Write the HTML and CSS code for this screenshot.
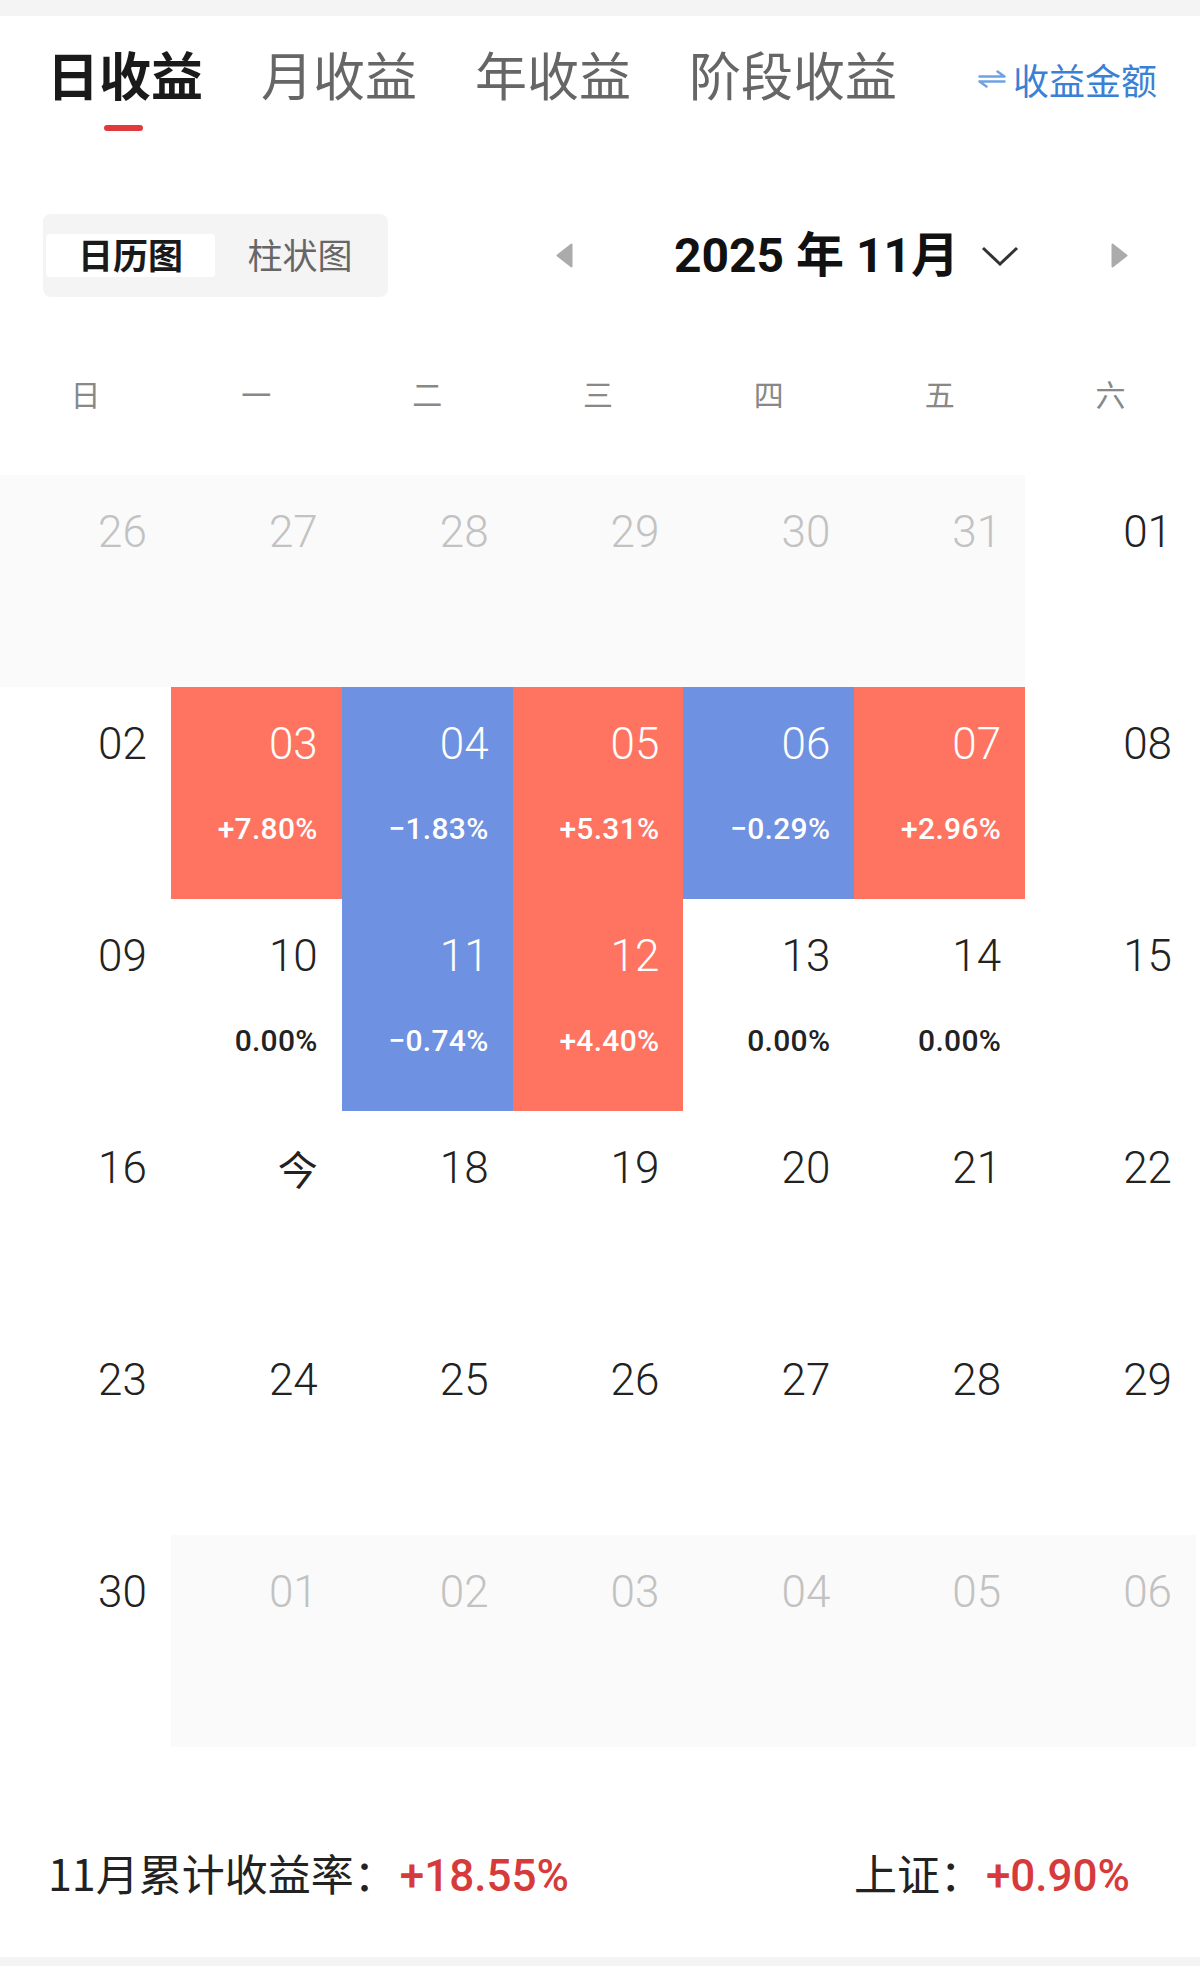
FILE: index.html
```html
<!DOCTYPE html>
<html lang="zh-CN">
<head>
<meta charset="utf-8">
<title>日收益</title>
<link rel="stylesheet" href="styles.css">
</head>
<body>
<div class="page">
  <div class="topbar"></div>
  <header class="tabs">
    <div class="tab active"><span>日收益</span><i class="underline"></i></div>
    <div class="tab">月收益</div>
    <div class="tab">年收益</div>
    <div class="tab">阶段收益</div>
    <div class="switch">
      <svg class="swap" width="28" height="18" viewBox="0 0 28 18"><path d="M1.5 6.5H26.5M26.5 6.5L19.5 1.5M26.5 11.5H1.5M1.5 11.5L8.5 16.5" fill="none" stroke="#6ea3e3" stroke-width="2.4" stroke-linecap="round" stroke-linejoin="round"/></svg>
      <span>收益金额</span>
    </div>
  </header>

  <div class="toolbar">
    <div class="segment">
      <div class="seg on">日历图</div>
      <div class="seg">柱状图</div>
    </div>
    <div class="monthnav">
      <svg class="tri" width="17" height="25" viewBox="0 0 17 25"><path d="M15.5 1.5L1.5 12.5L15.5 23.5Z" fill="#ababab" stroke="#ababab" stroke-width="2" stroke-linejoin="round"/></svg>
      <div class="month">2025 年 11月</div>
      <svg class="chev" width="38" height="20" viewBox="0 0 38 20"><path d="M2 2L19 18L36 2" fill="none" stroke="#333" stroke-width="3"/></svg>
      <svg class="tri next" width="17" height="25" viewBox="0 0 17 25"><path d="M1.5 1.5L15.5 12.5L1.5 23.5Z" fill="#ababab" stroke="#ababab" stroke-width="2" stroke-linejoin="round"/></svg>
    </div>
  </div>

  <div class="weekdays">
    <div>日</div><div>一</div><div>二</div><div>三</div><div>四</div><div>五</div><div>六</div>
  </div>

  <div class="grid">
    <div class="cell muted"><span class="num">26</span></div>
    <div class="cell muted"><span class="num">27</span></div>
    <div class="cell muted"><span class="num">28</span></div>
    <div class="cell muted"><span class="num">29</span></div>
    <div class="cell muted"><span class="num">30</span></div>
    <div class="cell muted"><span class="num">31</span></div>
    <div class="cell"><span class="num">01</span></div>

    <div class="cell"><span class="num">02</span></div>
    <div class="cell up"><span class="num">03</span><span class="pct">+7.80%</span></div>
    <div class="cell down"><span class="num">04</span><span class="pct">−1.83%</span></div>
    <div class="cell up"><span class="num">05</span><span class="pct">+5.31%</span></div>
    <div class="cell down"><span class="num">06</span><span class="pct">−0.29%</span></div>
    <div class="cell up"><span class="num">07</span><span class="pct">+2.96%</span></div>
    <div class="cell"><span class="num">08</span></div>

    <div class="cell"><span class="num">09</span></div>
    <div class="cell"><span class="num">10</span><span class="pct">0.00%</span></div>
    <div class="cell down"><span class="num">11</span><span class="pct">−0.74%</span></div>
    <div class="cell up"><span class="num">12</span><span class="pct">+4.40%</span></div>
    <div class="cell"><span class="num">13</span><span class="pct">0.00%</span></div>
    <div class="cell"><span class="num">14</span><span class="pct">0.00%</span></div>
    <div class="cell"><span class="num">15</span></div>

    <div class="cell"><span class="num">16</span></div>
    <div class="cell"><span class="num today">今</span></div>
    <div class="cell"><span class="num">18</span></div>
    <div class="cell"><span class="num">19</span></div>
    <div class="cell"><span class="num">20</span></div>
    <div class="cell"><span class="num">21</span></div>
    <div class="cell"><span class="num">22</span></div>

    <div class="cell"><span class="num">23</span></div>
    <div class="cell"><span class="num">24</span></div>
    <div class="cell"><span class="num">25</span></div>
    <div class="cell"><span class="num">26</span></div>
    <div class="cell"><span class="num">27</span></div>
    <div class="cell"><span class="num">28</span></div>
    <div class="cell"><span class="num">29</span></div>

    <div class="cell"><span class="num">30</span></div>
    <div class="cell muted"><span class="num">01</span></div>
    <div class="cell muted"><span class="num">02</span></div>
    <div class="cell muted"><span class="num">03</span></div>
    <div class="cell muted"><span class="num">04</span></div>
    <div class="cell muted"><span class="num">05</span></div>
    <div class="cell muted"><span class="num">06</span></div>
  </div>

  <div class="summary">
    <div class="stat"><span class="label">11月累计收益率：</span><span class="value">+18.55%</span></div>
    <div class="stat"><span class="label">上证：</span><span class="value">+0.90%</span></div>
  </div>
  <div class="bottombar"></div>
</div>
</body>
</html>
```

FILE: styles.css
```css
* { box-sizing: border-box; }
html, body { margin: 0; padding: 0; background: #fff; }
body {
  font-family: "Noto Sans CJK SC", "Noto Sans", sans-serif;
  color: #222;
}
.page { width: 1200px; }

.topbar { height: 16px; background: #f4f4f4; }

.tabs {
  height: 198px;
  display: flex;
  align-items: flex-start;
  padding: 28px 0 0 47px;
}
.tab {
  display: flex;
  flex-direction: column;
  align-items: center;
  font-size: 52px;
  line-height: 60px;
  color: #666;
  margin-right: 58px;
}
.tab.active { color: #1a1a1a; font-weight: 700; }
.underline {
  display: block;
  width: 39px;
  height: 6px;
  border-radius: 3px;
  background: #e13a3c;
  margin-top: 21px;
  margin-right: 4px;
}
.switch {
  margin-left: auto;
  margin-right: 43px;
  margin-top: 5px;
  display: flex;
  align-items: center;
  font-size: 36px;
  line-height: 60px;
  color: #3a80d4;
}
.swap { margin-right: 7px; }

.toolbar {
  height: 83px;
  display: flex;
  align-items: center;
  padding-left: 43px;
}
.segment {
  width: 345px;
  height: 83px;
  background: #f4f4f4;
  border-radius: 8px;
  display: flex;
  align-items: center;
  padding: 0 3px;
}
.seg {
  flex: 1;
  height: 43px;
  line-height: 39px;
  text-align: center;
  font-size: 35px;
  color: #666;
}
.seg.on {
  flex: 0 0 169px;
  background: #fff;
  border-radius: 4px;
  color: #1a1a1a;
  font-weight: 700;
}
.monthnav {
  display: flex;
  align-items: center;
  margin-left: 168px;
}
.tri { display: block; }
.month {
  margin-left: 101px;
  font-family: "Roboto", "Noto Sans CJK SC", sans-serif;
  font-weight: 700;
  font-size: 48px;
  line-height: 60px;
  color: #111;
}
.chev { display: block; margin-left: 22px; }
.tri.next { margin-left: 92px; }

.weekdays {
  width: 1196px;
  margin-top: 76px;
  display: grid;
  grid-template-columns: repeat(7, 1fr);
  font-size: 30px;
  line-height: 40px;
  color: #888;
  text-align: center;
}

.grid {
  width: 1196px;
  margin-top: 62px;
  display: grid;
  grid-template-columns: repeat(7, 1fr);
  grid-auto-rows: 212px;
}
.cell {
  display: flex;
  flex-direction: column;
  align-items: flex-end;
  padding: 35px 24px 0 0;
  font-family: "Roboto", "Noto Sans CJK SC", sans-serif;
  color: #222;
}
.num {
  font-size: 44px;
  line-height: 44px;
  font-weight: 300;
}
.num.today {
  font-family: "Noto Sans CJK SC", sans-serif;
  font-size: 40px;
  font-weight: 400;
}
.pct {
  margin-top: 48px;
  font-size: 30px;
  line-height: 30px;
  font-weight: 500;
  letter-spacing: 0.3px;
}
.cell.muted { background: #fafafa; color: #c2c2c2; }
.cell.up { background: #fe7460; color: #fff; }
.cell.down { background: #6f91e1; color: #fff; }

.summary {
  height: 210px;
  display: flex;
  justify-content: space-between;
  align-items: center;
  padding: 40px 70px 0 48px;
}
.stat { display: flex; align-items: baseline; }
.label { font-size: 43px; color: #222; }
.value {
  margin-left: 3px;
  font-family: "Roboto", sans-serif;
  font-size: 44px;
  font-weight: 500;
  color: #d63a3a;
}
.bottombar { height: 9px; background: #f4f4f4; }
```
